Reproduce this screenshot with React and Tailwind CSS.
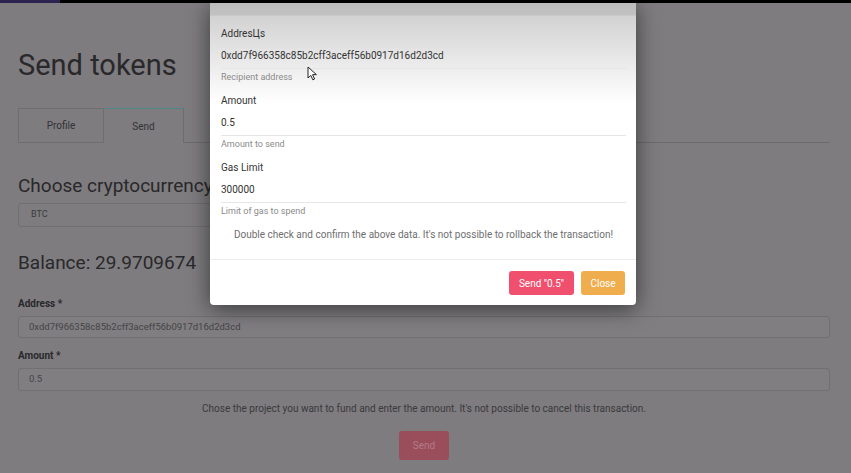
import React from 'react';

function Field({ label, value, help }) {
  return (
    <div className="mb-[12px]">
      <div className="text-[10px] leading-[12px] text-[#333]">{label}</div>
      <div className="mt-[10px] pb-[6px] border-b border-[#e6e6e6] text-[10px] leading-[12px] text-[#333]">
        {value}
      </div>
      <div className="mt-[3px] text-[9px] leading-[11px] text-[#8a8a8a]">{help}</div>
    </div>
  );
}

function ConfirmModal() {
  return (
    <div className="absolute left-[210px] top-[3px] w-[426px] h-[302px] rounded-b-[4px] overflow-hidden shadow-[0_4px_22px_rgba(0,0,0,0.55)] bg-[linear-gradient(180deg,#bcbcbc_0px,#c2c2c2_12px,#d2d2d2_13px,#ffffff_100px,#ffffff_100%)] flex flex-col">
      <div className="h-[13px] border-b border-[#c8c8c8]" />
      <div className="pl-[11px] pr-[10px] pt-[12px]">
        <Field
          label="AddresЦs"
          value="0xdd7f966358c85b2cff3aceff56b0917d16d2d3cd"
          help="Recipient address"
        />
        <Field label="Amount" value="0.5" help="Amount to send" />
        <Field label="Gas Limit" value="300000" help="Limit of gas to spend" />
        <p className="text-center text-[10px] leading-[12px] text-[#6f6f6f] pb-[18px]">
          Double check and confirm the above data. It's not possible to rollback the transaction!
        </p>
      </div>
      <div className="border-t border-[#ececec] flex justify-end gap-[7px] pt-[11px] pr-[11px]">
        <button
          type="button"
          className="h-[24px] w-[65px] rounded-[3px] bg-[#f0506e] text-white text-[10px]"
        >
          Send "0.5"
        </button>
        <button
          type="button"
          className="h-[24px] w-[44px] rounded-[3px] bg-[#f0ad4e] text-white text-[10px]"
        >
          Close
        </button>
      </div>

      {/* mouse pointer */}
      <svg
        className="absolute left-[97px] top-[63px]"
        width="11"
        height="15"
        viewBox="0 0 11 15"
      >
        <path
          d="M1 1 L1 12 L3.8 9.4 L5.8 13.8 L7.6 13 L5.6 8.7 L9.4 8.6 Z"
          fill="#fff"
          stroke="#222"
          strokeWidth="1"
          strokeLinejoin="round"
        />
      </svg>
    </div>
  );
}

export default function App() {
  return (
    <div className="relative w-full h-[473px] overflow-hidden bg-[#7e7c7f] font-['Roboto',sans-serif]">
      <div className="h-[3px] bg-black flex">
        <div className="w-[60px] bg-[#2c2350]" />
      </div>

      <main className="px-[18px] pr-[21px]">
        <h1 className="mt-[45px] text-[29px] leading-[35px] text-[#29282a]">Send tokens</h1>

        <div className="mt-[25px] flex border-b border-[#6c6b6e]">
          <div className="w-[86px] h-[35px] -mb-px flex items-center justify-center border border-[#6e6d70] text-[10px] text-[#333234]">
            Profile
          </div>
          <div className="w-[80px] h-[35px] -mb-px flex items-center justify-center border-t border-t-[#4a8789] border-r border-r-[#6e6d70] bg-[#7e7c7f] text-[10px] text-[#333234]">
            Send
          </div>
        </div>

        <h2 className="mt-[31px] text-[19px] leading-[23px] text-[#29282a]">Choose cryptocurrency:</h2>
        <div className="mt-[6px] w-[320px] h-[24px] flex items-center pl-[12px] border border-[#706f72] rounded-[3px] text-[9px] text-[#3b3a3c]">
          BTC
        </div>

        <h2 className="mt-[24px] text-[19px] leading-[23px] text-[#29282a]">Balance: 29.9709674</h2>

        <label className="block mt-[24px] text-[10px] leading-[12px] font-bold text-[#29282a]">
          Address *
        </label>
        <div className="mt-[6px] h-[22px] flex items-center pl-[10px] border border-[#706f72] rounded-[3px] bg-[#807e81] text-[9.5px] text-[#454446]">
          0xdd7f966358c85b2cff3aceff56b0917d16d2d3cd
        </div>

        <label className="block mt-[12px] text-[10px] leading-[12px] font-bold text-[#29282a]">
          Amount *
        </label>
        <div className="mt-[6px] h-[23px] flex items-center pl-[10px] border border-[#706f72] rounded-[3px] bg-[#807e81] text-[9.5px] text-[#454446]">
          0.5
        </div>

        <p className="mt-[12px] text-center text-[10px] leading-[12px] text-[#3a393b]">
          Chose the project you want to fund and enter the amount. It's not possible to cancel this transaction.
        </p>

        <div className="mt-[16px] flex justify-center">
          <button
            type="button"
            className="w-[50px] h-[29px] rounded-[3px] bg-[#9a4e5c] text-[10px] text-[#b27b89]"
          >
            Send
          </button>
        </div>
      </main>

      <ConfirmModal />
    </div>
  );
}
